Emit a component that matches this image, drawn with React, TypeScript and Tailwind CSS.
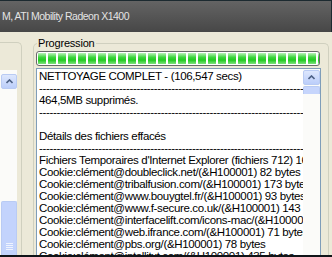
const lines = [
  "NETTOYAGE COMPLET - (106,547 secs)",
  "-".repeat(90),
  "464,5MB supprimés.",
  "-".repeat(90),
  "",
  "Détails des fichiers effacés",
  "-".repeat(90),
  "Fichiers Temporaires d'Internet Explorer (fichiers 712) 16,1MB",
  "Cookie:clément@doubleclick.net/(&H100001) 82 bytes",
  "Cookie:clément@tribalfusion.com/(&H100001) 173 bytes",
  "Cookie:clément@www.bouygtel.fr/(&H100001) 93 bytes",
  "Cookie:clément@www.f-secure.co.uk/(&H100001) 143 bytes",
  "Cookie:clément@interfacelift.com/icons-mac/(&H100001) 85 bytes",
  "Cookie:clément@web.ifrance.com/(&H100001) 71 bytes",
  "Cookie:clément@pbs.org/(&H100001) 78 bytes",
  "Cookie:clément@intellitxt.com/(&H100001) 435 bytes",
];

const segments = Array.from({ length: 30 }, (_, i) => i);

const UpButton = () => (
  <div className="flex h-[15px] w-full shrink-0 items-center justify-center rounded-[2px] border border-[#b9cbf3] bg-gradient-to-b from-[#dde7fd] to-[#bccefa]">
    <svg width="7" height="5" viewBox="0 0 7 5">
      <path d="M0.5 4 L3.5 1 L6.5 4" fill="none" stroke="#4d6185" strokeWidth="1.6" />
    </svg>
  </div>
);

const LeftPanel = () => (
  <div className="w-[33px] shrink-0 pt-[10px]">
    <div className="flex h-full w-[22px] flex-col rounded-tr-[5px] border-t border-r border-[#d0d0bf] pt-[27px]">
      <div className="flex w-[17px] flex-1 flex-col bg-[#fbfbf9] pt-[4px] pl-[1px]">
        <UpButton />
        <div className="flex-1" />
        <div className="flex h-[54px] flex-col items-center justify-end rounded-t-[2px] border border-b-0 border-[#b9cbf3] bg-[#c3d3fc] pb-[5px]">
          <div className="mb-[1px] h-px w-[7px] bg-[#eef3fe]" />
          <div className="mb-[1px] h-px w-[7px] bg-[#eef3fe]" />
          <div className="mb-[1px] h-px w-[7px] bg-[#eef3fe]" />
          <div className="h-px w-[7px] bg-[#eef3fe]" />
        </div>
      </div>
    </div>
  </div>
);

export default function App() {
  return (
    <div className="flex h-[257px] w-[332px] flex-col overflow-hidden bg-[#ece9d8] font-['Liberation_Sans',Arial,sans-serif] text-black">
      <div className="flex h-[32px] shrink-0 items-center border-t border-r border-[#1c2a30] bg-gradient-to-b from-[#646464] to-[#474747] pl-[2px] text-[10.5px] tracking-[-0.5px] text-[#e4e4e4]">
        M, ATI Mobility Radeon X1400
      </div>
      <div className="flex min-h-0 flex-1">
        <LeftPanel />
        <fieldset className="mt-[4px] flex min-h-0 w-[296px] min-w-0 shrink-0 flex-col rounded-t-[5px] border border-b-0 border-[#d0d0bf] pr-[7px] pl-[2px]">
          <legend className="ml-[1px] px-[1px] text-[11px] leading-[14px] tracking-[-0.2px]">Progression</legend>
          <div className="mt-[1px] mr-[1px] flex h-[15px] gap-[2px] overflow-hidden rounded-[3px] border border-[#686868] bg-white p-[1px]">
            {segments.map((i) => (
              <div
                key={i}
                className="h-full w-[8px] shrink-0 bg-[linear-gradient(to_bottom,#b8f0b8,#3cd43c_40%,#22c922_65%,#7fe27f)]"
              />
            ))}
          </div>
          <div className="mt-[2px] flex min-h-0 min-w-0 flex-1 border border-b-0 border-[#7f9db9] bg-white">
            <div className="min-w-0 flex-1 overflow-hidden pt-[1px] pl-[2px] text-[11.5px] leading-[12px] tracking-[-0.35px] whitespace-pre">
              {lines.map((l, i) => (
                <div key={i} className="h-[12px]">
                  {l}
                </div>
              ))}
            </div>
            <div className="flex w-[17px] shrink-0 flex-col bg-[#fbfbf9] pt-[1px]">
              <UpButton />
              <div className="mt-[1px] h-[8px] rounded-t-[2px] border border-b-0 border-[#b9cbf3] bg-[#c6d5fc]" />
            </div>
          </div>
        </fieldset>
      </div>
      <div className="h-[2px] shrink-0 bg-[#101418]" />
    </div>
  );
}
